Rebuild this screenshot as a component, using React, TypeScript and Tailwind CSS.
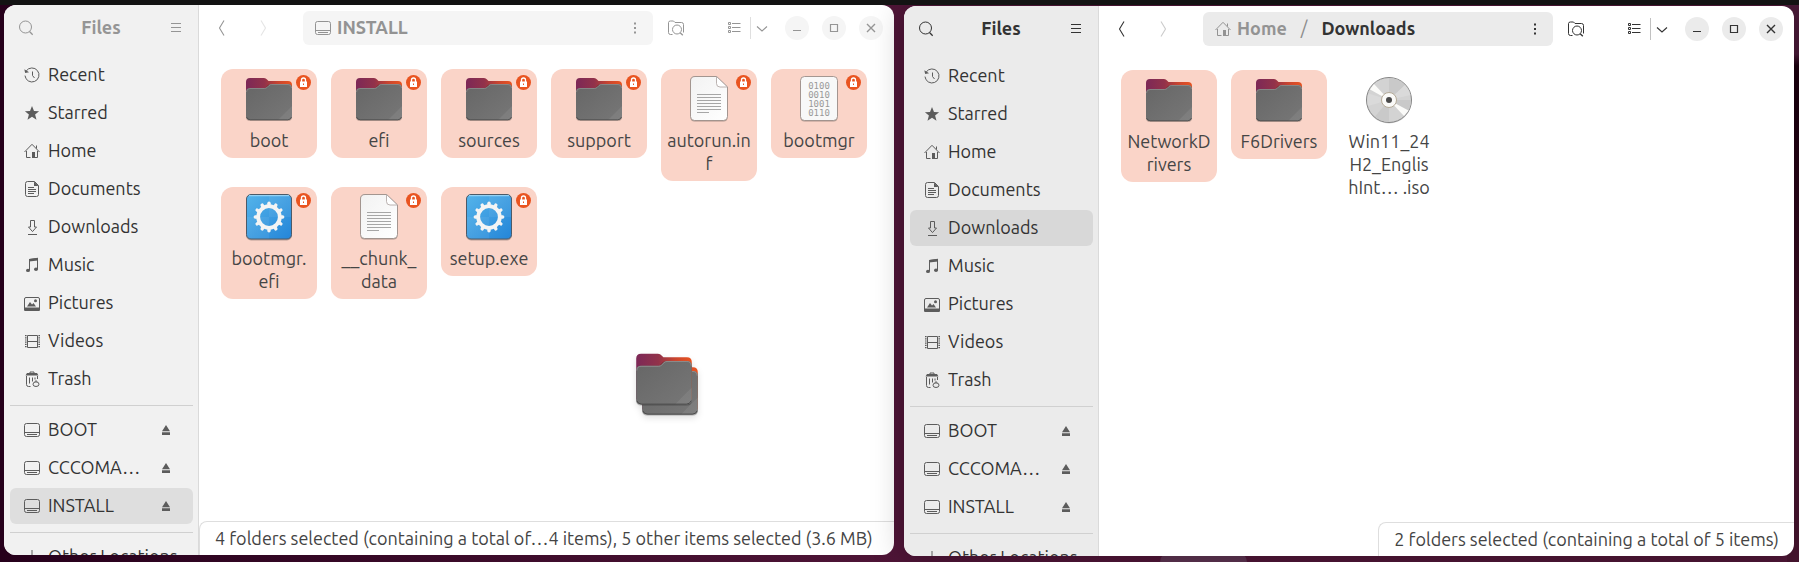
import React from "react";

type IconProps = { className?: string };
type Kind = "folder" | "text" | "binary" | "exe" | "disc";
type FileItem = { lines: string[]; kind: Kind; selected?: boolean; locked?: boolean };
type Crumb = { label: string; icon?: React.FC<IconProps>; current?: boolean };

function Sym({ children, className = "size-4" }: { children: React.ReactNode; className?: string }) {
  return (
    <svg viewBox="0 0 16 16" className={`${className} shrink-0`} fill="none" stroke="currentColor" aria-hidden="true">
      {children}
    </svg>
  );
}

const SearchIcon = () => (
  <Sym>
    <circle cx="7.5" cy="7" r="6" />
    <path d="M11.5 11.5l3.2 3.2" strokeWidth="1.3" />
  </Sym>
);
const MenuIcon = () => (
  <Sym>
    <path d="M3 3.5h10M3 7.500h10M3 11.500h10" strokeWidth="1.1" />
  </Sym>
);
const BackIcon = () => (
  <Sym>
    <path d="M10 .5L5.5 8 10 15.500" strokeWidth="1.1" />
  </Sym>
);
const ForwardIcon = () => (
  <Sym>
    <path d="M6 .5l4.5 7.5L6 15.500" strokeWidth="1.1" />
  </Sym>
);
const RecentIcon = () => (
  <Sym>
    <path d="M2.2 4A7 7 0 1 1 1 8.6" />
    <path d="M.3 2.2L1.2 6l3.9-.8z" fill="currentColor" stroke="none" />
    <path d="M8.5 4.5v4l2 2.5" />
  </Sym>
);
const StarIcon = () => (
  <Sym>
    <path
      d="M8 1l2 4.9 5.1.3-4 3.3 1.4 5.2L8 11.8l-4.5 2.9 1.4-5.2-4-3.3L6 5.9z"
      fill="currentColor"
      stroke="none"
    />
  </Sym>
);
const HomeIcon = ({ className }: IconProps) => (
  <Sym className={className}>
    <path d="M.5 9L8 1.3 15.5 9M2.5 8v6.5h4M13.5 8v6.5h-3M12.5 2.5v3" />
    <path d="M8 9h3v6H8z" fill="currentColor" stroke="none" />
  </Sym>
);
const DocumentsIcon = () => (
  <Sym>
    <path d="M3.5.5h7l4 4v9q0 2-2 2h-9q-2 0-2-2v-11q0-2 2-2z" />
    <path d="M10 .5V5h4.5z" fill="currentColor" stroke="none" />
    <path d="M4 6.5h6M4 8.5h8M4 10.5h8M4 12.5h6" />
  </Sym>
);
const DownloadsIcon = () => (
  <Sym>
    <path d="M6.5 1.5h4V8h2l-4 4.6L4.5 8h2zM4 15.5h9" />
  </Sym>
);
const MusicIcon = () => (
  <Sym>
    <path d="M5.5 13V2.5l8-1V12" />
    <path d="M5 2l9-1.2v2.7L5 4.6z" fill="currentColor" stroke="none" />
    <ellipse cx="4" cy="13.4" rx="2" ry="1.7" fill="currentColor" stroke="none" />
    <ellipse cx="12" cy="12.2" rx="2" ry="1.7" fill="currentColor" stroke="none" />
  </Sym>
);
const PicturesIcon = () => (
  <Sym>
    <rect x=".5" y="2.5" width="15" height="13" rx="1.5" />
    <path d="M3 11.5l3-4.5 2 2.5 1.5-1.5 2.5 3.5zM0 12.5h16v2.2q0 1.3-1.3 1.3H1.3Q0 16 0 14.7z" fill="currentColor" stroke="none" />
    <circle cx="11.5" cy="5.7" r="1.5" fill="currentColor" stroke="none" />
  </Sym>
);
const VideosIcon = () => (
  <Sym>
    <path d="M3.5 2.5h10v12h-10zM3.5 8.5h10" />
    <path d="M1.8 2v13M15.2 2v13" strokeWidth="1.6" strokeDasharray="1.2 1" />
  </Sym>
);
const TrashIcon = () => (
  <Sym>
    <path d="M6 2V1h4v1" />
    <path d="M3 2h10l1.5 2.6h-13z" fill="currentColor" stroke="none" />
    <path d="M2.5 5v8.5q0 2 2 2h2M13.5 5v3M5.5 6.5v6M8.5 6.5v4M11 6.5v2" />
    <ellipse cx="12" cy="13.2" rx="3" ry="2.3" />
    <path d="M11 10.8l1-1.3 1 1.3" />
  </Sym>
);
const DriveIcon = ({ className }: IconProps) => (
  <Sym className={className}>
    <rect x=".5" y="1.5" width="15" height="13" rx="2" />
    <path d="M1 10.5h14M3 12.5h10" />
  </Sym>
);
const PlusIcon = () => (
  <Sym>
    <path d="M8 1v14M1 8h14" />
  </Sym>
);
const EjectIcon = () => (
  <Sym>
    <path d="M8 3l4 6.2H4zM4 10.3h8V13H4z" fill="currentColor" stroke="none" />
  </Sym>
);
const DotsIcon = () => (
  <Sym>
    <path d="M7 2.5h2v2H7zM7 7h2v2H7zM7 11.5h2v2H7z" fill="currentColor" stroke="none" />
  </Sym>
);
const FolderSearchIcon = () => (
  <Sym>
    <path d="M4.5 14.5h-2q-2 0-2-2v-10q0-1.5 2-1.5h3l1.5 1.5h6.5q2 0 2 2v8" />
    <circle cx="9" cy="9.5" r="4.5" />
    <path d="M12.2 12.7l2.6 2.6" strokeWidth="1.3" />
  </Sym>
);
const ListIcon = () => (
  <Sym>
    <path d="M2.5 2.500h2v2h-2zM2.5 6.500h2v2h-2zM2.5 10.500h2v2h-2zM6 3.5h8.500M6 7.500h8.500M6 11.500h8.500" />
  </Sym>
);
const ChevronIcon = () => (
  <Sym>
    <path d="M3 6.5l5 4.5 5-4.5" strokeWidth="1.1" />
  </Sym>
);
const MinimizeIcon = () => (
  <Sym>
    <path d="M4 10.5h8" />
  </Sym>
);
const MaximizeIcon = () => (
  <Sym>
    <path d="M4.5 4.5h7v7h-7z" strokeWidth="1.2" />
  </Sym>
);
const CloseIcon = () => (
  <Sym>
    <path d="M4 4l8 8M12 4l-8 8" strokeWidth="1.4" />
  </Sym>
);

function FolderArt({ id, className }: { id: string; className: string }) {
  return (
    <svg viewBox="0 0 48 48" className={className} aria-hidden="true">
      <defs>
        <linearGradient id={`${id}-back`} x1="0" y1="0" x2="1" y2="0">
          <stop offset="0" stopColor="#7c2857" />
          <stop offset=".4" stopColor="#92324a" />
          <stop offset=".7" stopColor="#c9452f" />
          <stop offset="1" stopColor="#e95420" />
        </linearGradient>
        <linearGradient id={`${id}-front`} x1="0" y1="0" x2="1" y2="1">
          <stop offset="0" stopColor="#666" />
          <stop offset="1" stopColor="#777" />
        </linearGradient>
      </defs>
      <path d="M1 7q0-4 4-4h14q2 0 3 1.5L23.500 6H43q4 0 4 4v31H1z" fill={`url(#${id}-back)`} />
      <path d="M1 18q0-4.500 4-4.500h15l2.500-3q.8-1 2-1H43q4 0 4 4V42q0 4-4 4H5q-4 0-4-4z" fill="#000" opacity=".25" />
      <path d="M1 17q0-4 4-4h14.500q1.500 0 2.500-1l2-2q1-1 2.500-1H43q4 0 4 4v28q0 4-4 4H5q-4 0-4-4z" fill={`url(#${id}-front)`} />
      <path d="M1.500 17q0-3.500 3.500-3.500h14.500q1.500 0 2.500-1l2-2q1-1 2.500-1H43q3.500 0 3.500 3.500" fill="none" stroke="#999" strokeWidth=".6" />
      <path d="M47 31v10q0 4-4 4H33z" fill="#fff" opacity=".07" />
      <path d="M1.500 42q1 2.800 4 2.800h37q3 0 4-2.800" fill="none" stroke="#4a4a4a" strokeWidth=".8" />
    </svg>
  );
}

function PageArt({ id }: { id: string }) {
  return (
    <svg viewBox="0 0 48 48" className="size-12" aria-hidden="true">
      <defs>
        <linearGradient id={id} x1="0" y1="0" x2="1" y2="1">
          <stop offset="0" stopColor="#f2f2f2" />
          <stop offset="1" stopColor="#fff" />
        </linearGradient>
      </defs>
      <path d="M5.500 6q0-4.500 4.500-4.500h22L42.500 12v30.500q0 4-4 4h-29q-4 0-4-4z" fill="#000" opacity=".3" />
      <path d="M5.500 6q0-4.500 4.500-4.500h21.500L42.500 12v29.500q0 4-4 4H9.500q-4 0-4-4z" fill={`url(#${id})`} stroke="#9b8d88" strokeWidth=".9" />
      <path d="M31.500 1.500v7q0 3.500 3.500 3.500h7.500z" fill="#fff" stroke="#a9a09d" strokeWidth=".8" />
      <path d="M12 19.500h24M12 22.500h24M12 25.500h24M12 28.500h24M12 31.500h24M12 34.500h24M12 37.500h12" stroke="#a6a6a6" />
    </svg>
  );
}

function BinaryArt() {
  const rows = ["0100", "0010", "1001", "0110"];
  return (
    <svg viewBox="0 0 48 48" className="size-12" aria-hidden="true">
      <rect x="5.500" y="2.500" width="37" height="44" rx="4" fill="#000" opacity=".3" />
      <rect x="5.500" y="1.500" width="37" height="44" rx="4" fill="#f8f8f8" stroke="#9b8d88" strokeWidth=".9" />
      {rows.map((row, i) => (
        <text key={row} x="24" y={14 + i * 9} textAnchor="middle" fontSize="9" fill="#9a9a9a" fontFamily="'DejaVu Sans Mono', monospace">
          {row}
        </text>
      ))}
    </svg>
  );
}

function ExeArt({ id }: { id: string }) {
  const teeth = Array.from({ length: 12 }, (_, i) => i * 30);
  return (
    <svg viewBox="0 0 48 48" className="size-12" aria-hidden="true">
      <defs>
        <linearGradient id={id} x1="0" y1="0" x2="1" y2="1">
          <stop offset="0" stopColor="#55b4ea" />
          <stop offset="1" stopColor="#2485d8" />
        </linearGradient>
      </defs>
      <rect x="1" y="2" width="46" height="45.500" rx="5" fill="#000" opacity=".25" />
      <rect x="1.500" y="1.500" width="45" height="44.500" rx="4.500" fill={`url(#${id})`} stroke="#4c5a68" />
      <path d="M24 2h20q2 0 2 2v20H24zM2 24h22v21.500H5q-3 0-3-3z" fill="#fff" opacity=".06" />
      <path d="M4 2.700h40" stroke="#a5dcf8" />
      <g stroke="#f4f4f4" strokeWidth="3.400" strokeLinecap="round">
        {teeth.map((a) => (
          <path key={a} d="M24 12.500V10.300" transform={`rotate(${a} 24 24)`} />
        ))}
      </g>
      <circle cx="24" cy="24" r="10.800" fill="none" stroke="#f4f4f4" strokeWidth="3.800" />
    </svg>
  );
}

function DiscArt() {
  return (
    <svg viewBox="0 1 48 48" className="size-12" aria-hidden="true">
      <circle cx="24" cy="26" r="22.500" fill="#000" opacity=".15" />
      <circle cx="24" cy="25" r="22.500" fill="#d3d3d3" stroke="#858585" />
      <path d="M24 25V3a22 22 0 0 1 16 7zM24 25h22a22 22 0 0 1-3.500 12zM24 25v22a22 22 0 0 1-14-5.500z" fill="#c9c9c9" />
      <path d="M24 25L3.500 18.500A22 22 0 0 0 3 31zM24 25l16-15a22 22 0 0 1 5.500 10z" fill="#dadada" />
      <path d="M24 25L5 14.500l4-5.500zM24 25l19.500 10.500-4.500 5.500z" fill="#fbfbf9" />
      <circle cx="24" cy="25" r="7.500" fill="#fafaf8" stroke="#b5ab98" />
      <circle cx="24" cy="25" r="3" fill="#4a4a4a" />
    </svg>
  );
}

function LockBadge() {
  return (
    <svg viewBox="0 0 15 15" className="absolute top-1.5 right-1.5 size-[15px]" role="img" aria-label="Read-only">
      <circle cx="7.500" cy="7.500" r="7.500" fill="#e95420" />
      <path d="M5.500 7V5q0-2 2-2t2 2v2" fill="none" stroke="#fff" strokeWidth="1.300" />
      <path d="M4 6.500h7V12H4z" fill="#fff" />
      <path d="M7 8.500h1V10H7z" fill="#e95420" />
    </svg>
  );
}

function Artwork({ kind, id }: { kind: Kind; id: string }) {
  if (kind === "folder") return <FolderArt id={id} className="size-12" />;
  if (kind === "text") return <PageArt id={id} />;
  if (kind === "binary") return <BinaryArt />;
  if (kind === "exe") return <ExeArt id={id} />;
  return <DiscArt />;
}

function FileTile({ item }: { item: FileItem }) {
  const id = React.useId();
  return (
    <button
      type="button"
      aria-pressed={!!item.selected}
      className={`relative flex flex-col items-center gap-1.5 rounded-xl py-1.5 text-[#454545] ${item.selected ? "bg-[#fad4c8]" : ""}`}
    >
      <Artwork kind={item.kind} id={id} />
      {item.locked && <LockBadge />}
      <span className="text-center text-lg/[23px] whitespace-nowrap">
        {item.lines.map((line) => (
          <span key={line} className="block">
            {line}
          </span>
        ))}
      </span>
    </button>
  );
}

const places = [
  { label: "Recent", icon: RecentIcon },
  { label: "Starred", icon: StarIcon },
  { label: "Home", icon: HomeIcon },
  { label: "Documents", icon: DocumentsIcon },
  { label: "Downloads", icon: DownloadsIcon },
  { label: "Music", icon: MusicIcon },
  { label: "Pictures", icon: PicturesIcon },
  { label: "Videos", icon: VideosIcon },
  { label: "Trash", icon: TrashIcon },
];

const drives = ["BOOT", "CCCOMA…", "INSTALL"];

function PlaceRow({
  label,
  icon: Icon,
  current,
  ejectable,
}: {
  label: string;
  icon: React.FC<IconProps>;
  current?: boolean;
  ejectable?: boolean;
}) {
  return (
    <li className={`mb-0.5 flex h-9 items-center rounded-md pr-[19px] pl-3.5 ${current ? "bg-black/8" : ""}`}>
      <a href="#" aria-current={current ? "page" : undefined} className="flex min-w-0 flex-1 items-center gap-2 text-lg/[34px] text-[#333]">
        <span className="flex text-[#5c5c5c]">
          <Icon />
        </span>
        <span className="pb-0.5 whitespace-nowrap">{label}</span>
      </a>
      {ejectable && (
        <button type="button" aria-label={`Eject ${label}`} className="text-[#5c5c5c]">
          <EjectIcon />
        </button>
      )}
    </li>
  );
}

function Sidebar({ current, active }: { current: string; active: boolean }) {
  return (
    <aside
      className={`flex w-[195px] shrink-0 flex-col overflow-hidden border-r border-[#dadada] ${active ? "bg-[#ebebeb]" : "bg-[#f1f1f1]"}`}
    >
      <header className={`flex h-[46px] shrink-0 items-center justify-between px-3.5 ${active ? "text-[#333]" : "text-[#959595]"}`}>
        <button type="button" aria-label="Search">
          <SearchIcon />
        </button>
        <h1 className="pb-0.5 text-lg font-bold">Files</h1>
        <button type="button" aria-label="Menu">
          <MenuIcon />
        </button>
      </header>
      <nav className="min-h-0 flex-1 overflow-hidden pr-[5px] pl-1.5">
        <ul className="py-1.5">
          {places.map((p) => (
            <PlaceRow key={p.label} label={p.label} icon={p.icon} current={p.label === current} />
          ))}
        </ul>
        <hr className="border-[#d0d0d0]" />
        <ul className="py-1.5">
          {drives.map((d) => (
            <PlaceRow key={d} label={d} icon={DriveIcon} current={d === current} ejectable />
          ))}
        </ul>
        <hr className="border-[#d0d0d0]" />
        <ul className="py-1.5">
          <PlaceRow label="Other Locations" icon={PlusIcon} />
        </ul>
      </nav>
    </aside>
  );
}

function Toolbar({ crumbs, active }: { crumbs: Crumb[]; active: boolean }) {
  const circle = `flex size-6 items-center justify-center rounded-full ${active ? "bg-[#ebebeb]" : "bg-[#f5f5f5]"}`;
  return (
    <header className={`flex h-[46px] shrink-0 items-center pr-[11px] pl-1.5 ${active ? "text-[#333]" : "text-[#959595]"}`}>
      <div className="flex items-center gap-[7px]">
        <button type="button" aria-label="Back" className="flex size-[34px] items-center justify-center">
          <BackIcon />
        </button>
        <button type="button" aria-label="Forward" disabled className="flex size-[34px] items-center justify-center opacity-25">
          <ForwardIcon />
        </button>
      </div>
      <div className={`ml-[23px] flex h-[34px] min-w-0 flex-1 items-center rounded-md pr-2.5 pl-3 ${active ? "bg-[#ebebeb]" : "bg-[#f5f5f5]"}`}>
        <nav aria-label="Path" className="flex flex-1 items-center text-lg font-bold">
          {crumbs.map((c, i) => (
            <React.Fragment key={c.label}>
              {i > 0 && <span className="px-3.5 pb-0.5 font-normal text-[#8a8a8a]">/</span>}
              <a href="#" className={`flex items-center gap-1.5 ${c.current ? "" : "text-[#939393]"}`}>
                {c.icon && <c.icon />}
                <span className="pb-0.5">{c.label}</span>
              </a>
            </React.Fragment>
          ))}
        </nav>
        <button type="button" aria-label="Folder menu">
          <DotsIcon />
        </button>
      </div>
      <button type="button" aria-label="Search in folder" className="ml-1.5 flex size-[34px] items-center justify-center">
        <FolderSearchIcon />
      </button>
      <div className="ml-[25px] flex items-center">
        <button type="button" aria-label="List view" className="flex h-[34px] w-8 items-center justify-center">
          <ListIcon />
        </button>
        <span className="h-[22px] w-px bg-current opacity-30" />
        <button type="button" aria-label="View options" className="flex h-[34px] w-[22px] items-center justify-center">
          <ChevronIcon />
        </button>
      </div>
      <div className="ml-3 flex gap-[13px]">
        <button type="button" aria-label="Minimize" className={circle}>
          <MinimizeIcon />
        </button>
        <button type="button" aria-label="Maximize" className={circle}>
          <MaximizeIcon />
        </button>
        <button type="button" aria-label="Close" className={circle}>
          <CloseIcon />
        </button>
      </div>
    </header>
  );
}

function FilesWindow({
  active,
  current,
  crumbs,
  items,
  status,
  wideStatus,
  className,
  children,
}: {
  active: boolean;
  current: string;
  crumbs: Crumb[];
  items: FileItem[];
  status: string;
  wideStatus?: boolean;
  className: string;
  children?: React.ReactNode;
}) {
  return (
    <section aria-label={current} className={`relative flex min-w-0 flex-1 overflow-hidden rounded-xl bg-white ${className}`}>
      <Sidebar current={current} active={active} />
      <main className="flex min-w-0 flex-1 flex-col">
        <Toolbar crumbs={crumbs} active={active} />
        <div className="grid min-h-0 flex-1 grid-cols-[repeat(auto-fill,96px)] content-start items-start gap-x-3.5 gap-y-1.5 overflow-hidden pt-[18px] pl-[22px]">
          {items.map((item) => (
            <FileTile key={item.lines.join("")} item={item} />
          ))}
        </div>
        <footer
          role="status"
          className={`h-[34px] max-w-full shrink-0 self-end overflow-hidden rounded-tl-lg border-t border-l border-[#dedede] px-[15px] text-lg/[33px] whitespace-nowrap text-[#444] ${wideStatus ? "w-full" : ""}`}
        >
          {status}
        </footer>
      </main>
      {children}
    </section>
  );
}

const installFiles: FileItem[] = [
  { lines: ["boot"], kind: "folder", selected: true, locked: true },
  { lines: ["efi"], kind: "folder", selected: true, locked: true },
  { lines: ["sources"], kind: "folder", selected: true, locked: true },
  { lines: ["support"], kind: "folder", selected: true, locked: true },
  { lines: ["autorun.in", "f"], kind: "text", selected: true, locked: true },
  { lines: ["bootmgr"], kind: "binary", selected: true, locked: true },
  { lines: ["bootmgr.", "efi"], kind: "exe", selected: true, locked: true },
  { lines: ["__chunk_", "data"], kind: "text", selected: true, locked: true },
  { lines: ["setup.exe"], kind: "exe", selected: true, locked: true },
];

const downloadFiles: FileItem[] = [
  { lines: ["NetworkD", "rivers"], kind: "folder", selected: true },
  { lines: ["F6Drivers"], kind: "folder", selected: true },
  { lines: ["Win11_24", "H2_Englis", "hInt… .iso"], kind: "disc" },
];

export default function App() {
  return (
    <div className="relative flex h-screen flex-col overflow-hidden bg-[linear-gradient(90deg,#26001b,#4f1537_50%,#4f1737)] font-[Ubuntu,'Open_Sans',sans-serif]">
      <div className="absolute top-0 right-0 h-full w-3 bg-[linear-gradient(180deg,#4a1a38_54px,#1c000f_66px,#1c000f_110px,#47152f_400px)]" />
      <div className="absolute right-[552px] bottom-0 h-2.5 w-[87px] rounded-t-xl bg-[#5c3350]" />
      <div className="relative z-10 h-[5px] shrink-0 bg-[#131313]" />
      <div className="flex min-h-0 flex-1 gap-2.5 pr-[5px] pb-1.5 pl-1">
        <FilesWindow
          active={false}
          current="INSTALL"
          crumbs={[{ label: "INSTALL", icon: DriveIcon }]}
          items={installFiles}
          status="4 folders selected (containing a total of…4 items), 5 other items selected (3.6 MB)"
          wideStatus
          className="mb-px"
        >
          <div className="absolute top-[345px] left-[631px] drop-shadow-md">
            <FolderArt id="drag-under" className="absolute top-2.5 left-1.5 size-[58px]" />
            <FolderArt id="drag-over" className="relative size-[58px]" />
          </div>
        </FilesWindow>
        <FilesWindow
          active
          current="Downloads"
          crumbs={[
            { label: "Home", icon: HomeIcon },
            { label: "Downloads", current: true },
          ]}
          items={downloadFiles}
          status="2 folders selected (containing a total of 5 items)"
          className="mt-px shadow-[0_2px_32px_rgba(0,0,0,0.25)]"
        />
      </div>
    </div>
  );
}
